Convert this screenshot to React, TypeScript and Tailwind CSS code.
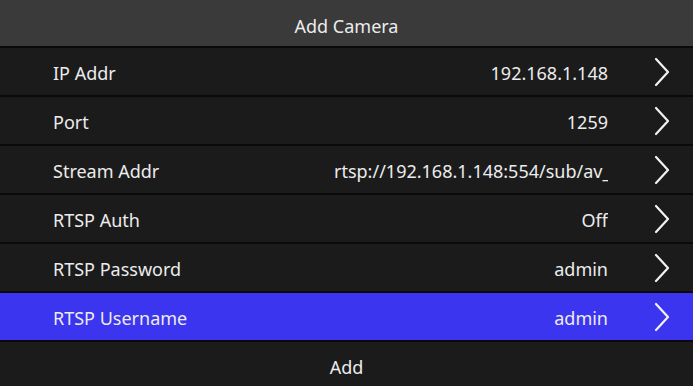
const rows = [
  { label: "IP Addr", value: "192.168.1.148" },
  { label: "Port", value: "1259" },
  { label: "Stream Addr", value: "rtsp://192.168.1.148:554/sub/av_stream" },
  { label: "RTSP Auth", value: "Off" },
  { label: "RTSP Password", value: "admin" },
  { label: "RTSP Username", value: "admin", active: true },
];

function Chevron() {
  return (
    <svg width="16" height="30" viewBox="0 0 16 30" fill="none" className="shrink-0">
      <path d="M2 2 L14 15 L2 28" stroke="#f2f2f2" strokeWidth="2.2" strokeLinecap="round" strokeLinejoin="round" />
    </svg>
  );
}

export default function App() {
  return (
    <div className="flex h-[386px] w-[693px] flex-col overflow-hidden bg-[#0a0a0a] font-['Noto_Sans',sans-serif] text-[18px] text-[#ececec]">
      <div className="flex h-[46px] shrink-0 items-center justify-center bg-[#3a3a3a] pt-[6px]">
        Add Camera
      </div>

      {rows.map((row) => (
        <div key={row.label} className="shrink-0 border-t-2 border-[#0a0a0a]">
          <div
            className={`flex h-[47px] items-center pl-[53px] pr-[23px] ${
              row.active ? "bg-[#3b35f0]" : "bg-[#1b1b1b]"
            }`}
          >
            <span className="whitespace-nowrap pt-[4px]">{row.label}</span>
            <div className="ml-auto flex items-center gap-[46px]">
              <span className="max-w-[274px] overflow-hidden whitespace-nowrap pt-[4px]">{row.value}</span>
              <Chevron />
            </div>
          </div>
        </div>
      ))}

      <div className="flex-1 border-t-2 border-[#0a0a0a]">
        <div className="flex h-full items-center justify-center bg-[#1b1b1b] pt-[6px]">Add</div>
      </div>
    </div>
  );
}
